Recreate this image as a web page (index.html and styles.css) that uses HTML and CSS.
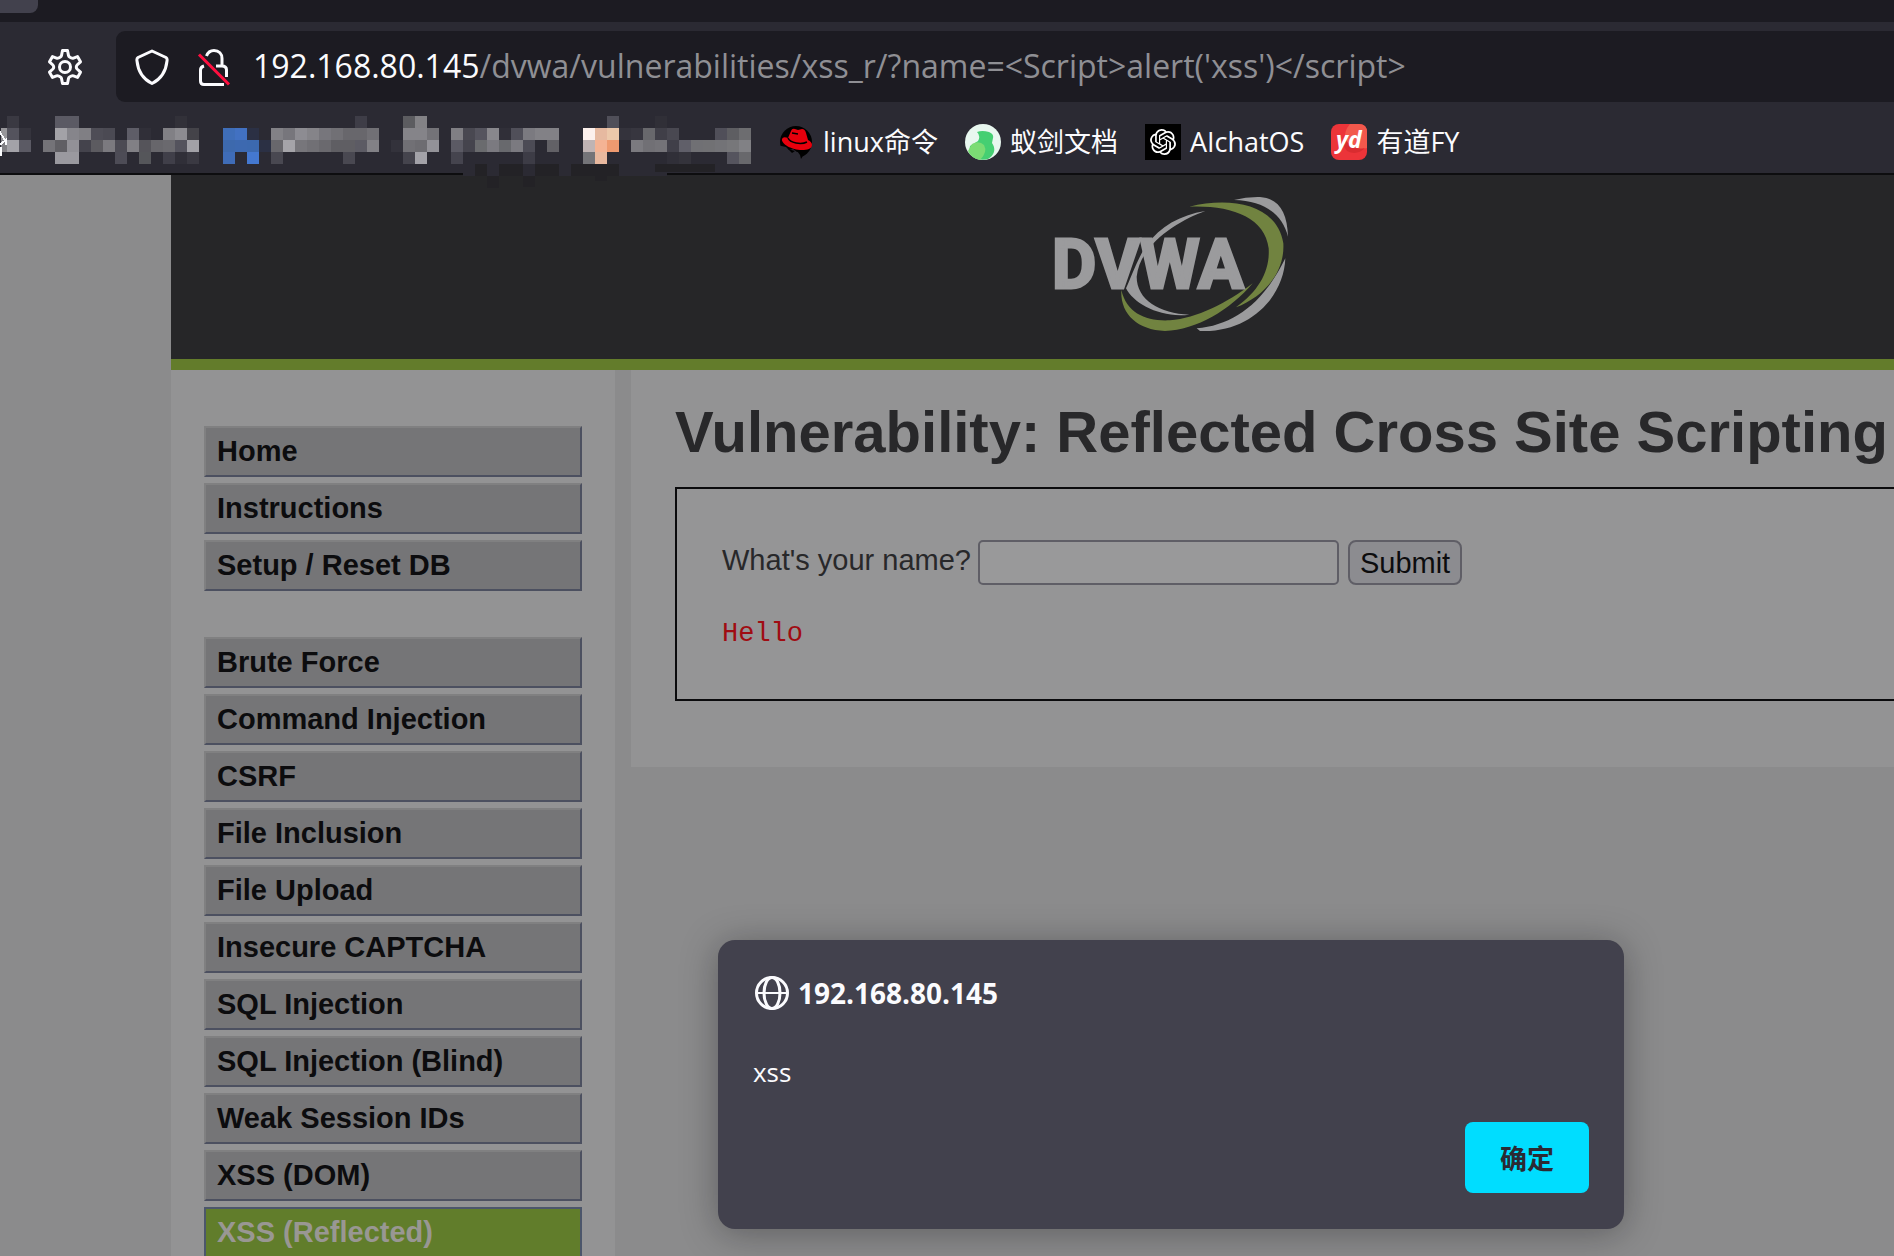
FILE: index.html
```html
<!DOCTYPE html>
<html lang="zh-CN">
<head>
<meta charset="utf-8">
<title>Vulnerability: Reflected Cross Site Scripting</title>
<link rel="stylesheet" href="styles.css">
</head>
<body>
<header class="chrome">
  <div class="tabstrip"><div class="tab"></div></div>
  <div class="navbar">
    <button class="icon-button" type="button" aria-label="Settings">
      <svg width="36" height="38" viewBox="0 0 36 38" fill="none" stroke="#fbfbfe" stroke-width="3" stroke-linejoin="round">
        <path d="M15.500 2.500h5l1 5q.3 1.100 1.400 1.700l1.500.8q1 .5 2.100.1l4-1.500 3 5.200-3.400 3.200q-.8.800-.8 2t.8 2l3.400 3.200-3 5.200-4-1.500q-1.100-.4-2.100.1l-1.500.8q-1.100.6-1.400 1.700l-1 5h-5l-1-5q-.3-1.100-1.400-1.700l-1.500-.8q-1-.5-2.100-.1l-4 1.500-3-5.200 3.400-3.200q.8-.8.8-2t-.8-2l-3.400-3.200 3-5.200 4 1.500q1.100.4 2.100-.1l1.500-.8q1.100-.6 1.400-1.700z"/>
        <circle cx="18" cy="19" r="5.500"/>
      </svg>
    </button>
    <div class="urlbar">
      <svg width="34" height="36" viewBox="0 0 34 36" fill="none" stroke="#fbfbfe" stroke-width="3" stroke-linejoin="round">
        <path d="M17 2 31 8.500Q32.500 9.500 32 12C31 22 26 30 17 34.500 8 30 3 22 2 12Q1.500 9.500 3 8.500z"/>
      </svg>
      <svg class="lock" width="34" height="38" viewBox="0 0 34 38" fill="none" stroke="#fbfbfe" stroke-width="3">
        <path d="M9.500 8C11 4 13.500 2.500 17 2.500c5 0 8 3.500 8 8V18h-6M7 18q-3.500 1-3.500 4v11q0 3.500 3.500 3.500h20M25 18q4.500 0 4.500 4v7"/>
        <path stroke="#ff0f3f" d="M2 6.500 32 36.500"/>
      </svg>
      <div class="url"><span class="host">192.168.80.145</span>/dvwa/vulnerabilities/xss_r/?name=&lt;Script&gt;alert('xss')&lt;/script&gt;</div>
    </div>
  </div>
  <nav class="bookmarks">
    <svg class="mosaic" width="744" height="48" viewBox="0 0 62 4" shape-rendering="crispEdges" aria-hidden="true">
      <g>
        <rect x="0" fill="#3a3942"/><rect x="4" fill="#5b5a64"/><rect x="5" fill="#5b5a64"/><rect x="14" fill="#323139"/><rect x="29" fill="#3e3d47"/><rect x="33" fill="#5c5c60"/><rect x="34" fill="#838286"/><rect x="50" fill="#504f59"/><rect x="54" fill="#302f37"/>
      </g>
      <g transform="translate(0 1)">
        <rect class="half" x="-0.5" fill="#97969a"/><rect x="0" fill="#54535d"/><rect x="1" fill="#35343d"/><rect x="4" fill="#a3a2a7"/><rect x="5" fill="#86858b"/><rect x="6" fill="#807f84"/><rect x="7" fill="#4e4d56"/><rect x="8" fill="#4b4a53"/><rect x="10" fill="#5e5d67"/><rect x="11" fill="#302f38"/><rect x="13" fill="#818085"/><rect x="14" fill="#8d8c91"/><rect x="15" fill="#444349"/>
        <rect x="18" fill="#3f6eb9"/><rect x="19" fill="#4271c2"/><rect x="20" fill="#2b3044"/>
        <rect x="22" fill="#828186"/><rect x="23" fill="#77767c"/><rect x="24" fill="#8d8c92"/><rect x="25" fill="#858489"/><rect x="26" fill="#77767c"/><rect x="27" fill="#717075"/><rect x="28" fill="#68676c"/><rect x="29" fill="#68676c"/><rect x="30" fill="#717075"/>
        <rect x="33" fill="#858489"/><rect x="34" fill="#858489"/><rect x="35" fill="#747378"/><rect x="37" fill="#807f84"/><rect x="38" fill="#494851"/><rect x="39" fill="#55545e"/><rect x="40" fill="#88878c"/><rect x="41" fill="#302f38"/><rect x="42" fill="#504f59"/><rect x="43" fill="#7b7a80"/><rect x="44" fill="#828186"/><rect x="45" fill="#828186"/>
        <rect x="48" fill="#fcf0ec"/><rect x="49" fill="#e6b9a0"/><rect x="50" fill="#ecc8aa"/><rect x="51" fill="#34333c"/><rect x="52" fill="#37363f"/><rect x="53" fill="#68686c"/><rect x="54" fill="#403f48"/><rect x="55" fill="#494851"/><rect x="59" fill="#504f59"/><rect x="60" fill="#5e5e62"/><rect x="61" fill="#6d6d70"/>
      </g>
      <g transform="translate(0 2)">
        <rect class="half" x="-0.5" fill="#818085"/><rect x="0" fill="#a3a2a8"/><rect x="1" fill="#5b5a64"/><rect x="3" fill="#747378"/><rect x="4" fill="#605f64"/><rect x="5" fill="#929197"/><rect x="6" fill="#44434c"/><rect x="7" fill="#5c5b60"/><rect x="8" fill="#7b7a7f"/><rect x="9" fill="#4c4b54"/><rect x="10" fill="#818085"/><rect x="11" fill="#55545a"/><rect x="12" fill="#67666b"/><rect x="13" fill="#6a696e"/><rect x="14" fill="#54535d"/><rect x="15" fill="#a2a1a7"/>
        <rect x="18" fill="#3d69ad"/><rect x="19" fill="#3d69b0"/><rect x="20" fill="#3c69af"/><rect x="21" fill="#2b3044"/>
        <rect x="22" fill="#68676c"/><rect x="23" fill="#a5a4a9"/><rect x="24" fill="#77767b"/><rect x="25" fill="#717075"/><rect x="26" fill="#6a696e"/><rect x="27" fill="#5f5e63"/><rect x="28" fill="#5f5e63"/><rect x="29" fill="#5c5b64"/><rect x="30" fill="#828186"/><rect x="32" fill="#33323b"/><rect x="33" fill="#717075"/><rect x="34" fill="#6d6c71"/><rect x="35" fill="#939298"/>
        <rect x="37" fill="#5b5a64"/><rect x="38" fill="#45444d"/><rect x="39" fill="#6a6b6e"/><rect x="40" fill="#7b7a80"/><rect x="41" fill="#68696d"/><rect x="42" fill="#7b7a80"/><rect x="43" fill="#4c4b55"/><rect x="45" fill="#626166"/>
        <rect x="48" fill="#c0b4b4"/><rect x="49" fill="#f4b394"/><rect x="50" fill="#ee9a70"/><rect x="52" fill="#7b7a7f"/><rect x="53" fill="#717075"/><rect x="54" fill="#747378"/><rect x="55" fill="#403f49"/><rect x="56" fill="#605f69"/><rect x="57" fill="#707074"/><rect x="58" fill="#717174"/><rect x="59" fill="#737377"/><rect x="60" fill="#77777a"/><rect x="61" fill="#818185"/>
      </g>
      <g transform="translate(0 3)">
        <rect x="4" fill="#9a999f"/><rect x="5" fill="#9a999f"/><rect x="9" fill="#4d4c56"/><rect x="11" fill="#55565a"/><rect x="13" fill="#403f49"/><rect x="14" fill="#302f38"/><rect x="15" fill="#3a3942"/><rect x="18" fill="#3f6cb7"/><rect x="20" fill="#4478d0"/><rect x="22" fill="#494851"/><rect x="28" fill="#494851"/><rect x="33" fill="#45444d"/><rect x="34" fill="#a3a2a8"/><rect x="37" fill="#45444e"/><rect x="43" fill="#3d3c46"/><rect x="48" fill="#747478"/><rect x="49" fill="#e8b89e"/><rect x="55" fill="#302f38"/><rect x="56" fill="#34333b"/><rect x="60" fill="#55545e"/><rect x="61" fill="#68686c"/>
      </g>
      <path fill="#2b2a33" d="M38 4h17v1H38z"/>
      <path fill="#232226" d="M39 4h1v1h-1zM41 4h2v1h-2zM44 4h2v1h-2zM47 4h4v1h-4zM54 4h5v.7h-5zM40 5h1v1h-1zM43 5h1v.9h-1zM49 5h1v.4h-1z"/>
      <path fill="none" stroke="#fbfbfe" stroke-width=".15" d="M-.6 1.300l.4.700M-.6 2.400l.5-.4v.4M-.5 2.600v.7"/>
    </svg>
    <a class="bookmark" href="#">
      <svg width="36" height="36" viewBox="1 0 36 36">
        <circle cx="19" cy="18" r="16" fill="#000"/>
        <path fill="#2b2a33" d="M0 21 9 23l3 3 4-1 4 3 6-1-1 9H0z"/>
        <path fill="#000" d="M11 25l7 2-3 2zM20 27l13-3-6 6-3 5-1-4z"/>
        <path fill="#e8000d" d="M11 14 14 7q1-3 4-2l3 1 4-1q3 0 4 4l2 7q4 2 4 5c0 4-5 5-10 5C15 26 4 20 5 15q1-3 6-1z"/>
        <path fill="none" stroke="#000" stroke-width="1.500" d="M11 14c2 5 13 7 19 4M15 9l6 1"/>
      </svg>
      <span>linux命令</span>
    </a>
    <a class="bookmark" href="#">
      <svg width="36" height="36" viewBox="0 0 36 36">
        <circle cx="18" cy="18" r="18" fill="#e8f7ef"/>
        <path fill="#45cf72" d="M12 8q5-2 12 0 5 2 4 6l-1 5c5 7 1 13-4 16Q12 38 4 29l1-7 8-5q3-5-1-9z"/>
        <path fill="#7bdc74" d="M3 27 7 20q7-4 12 1 4 7-4 15Q6 34 3 27z"/>
      </svg>
      <span>蚁剑文档</span>
    </a>
    <a class="bookmark" href="#">
      <svg width="36" height="36" viewBox="-6 -6 36 36">
        <path fill="#000" d="M-6-6h36v36H-6z"/>
        <path fill="#fff" transform="translate(-1 -1) scale(1.083)" d="M22.282 9.821a5.985 5.985 0 0 0-.516-4.910 6.046 6.046 0 0 0-6.510-2.900A6.065 6.065 0 0 0 4.981 4.182a5.985 5.985 0 0 0-3.998 2.900 6.046 6.046 0 0 0 .743 7.097 5.980 5.980 0 0 0 .511 4.911 6.051 6.051 0 0 0 6.515 2.900A5.985 5.985 0 0 0 13.260 24a6.056 6.056 0 0 0 5.772-4.206 5.990 5.990 0 0 0 3.998-2.900 6.056 6.056 0 0 0-.748-7.073zM13.260 22.430a4.476 4.476 0 0 1-2.876-1.041l.141-.080 4.779-2.758a.795.795 0 0 0 .392-.681v-6.737l2.020 1.169a.071.071 0 0 1 .038.052v5.583a4.504 4.504 0 0 1-4.494 4.493zM3.600 18.304a4.471 4.471 0 0 1-.535-3.014l.142.085 4.783 2.759a.771.771 0 0 0 .780 0l5.843-3.369v2.332a.080.080 0 0 1-.033.062L9.740 19.950a4.500 4.500 0 0 1-6.140-1.646zM2.341 7.896a4.485 4.485 0 0 1 2.366-1.973V11.600a.766.766 0 0 0 .388.677l5.814 3.354-2.020 1.169a.076.076 0 0 1-.071 0l-4.830-2.787A4.504 4.504 0 0 1 2.341 7.872zm16.596 3.856-5.833-3.388L15.119 7.200a.076.076 0 0 1 .071 0l4.830 2.791a4.494 4.494 0 0 1-.676 8.105v-5.678a.790.790 0 0 0-.407-.667zm2.011-3.023-.142-.085-4.774-2.782a.776.776 0 0 0-.785 0L9.409 9.230V6.897a.066.066 0 0 1 .028-.061l4.830-2.787a4.499 4.499 0 0 1 6.680 4.660zM8.307 12.863l-2.020-1.164a.080.080 0 0 1-.038-.057V6.075a4.499 4.499 0 0 1 7.376-3.454l-.142.081L8.704 5.460a.795.795 0 0 0-.393.681zm1.097-2.365 2.602-1.500 2.607 1.500v2.999l-2.597 1.500-2.607-1.500z"/>
      </svg>
      <span>AIchatOS</span>
    </a>
    <a class="bookmark" href="#">
      <svg width="36" height="36" viewBox="0 0 36 36">
        <rect width="36" height="36" rx="8" fill="#ec3439"/>
        <path fill="#f2584c" d="M19 0h9q8 0 8 8v16Q22 28 14 15q-1-8 5-15z"/>
        <path fill="#d92c30" d="M14 15q7 12 20 9-8 8-18 3-5-5-2-12z"/>
        <text class="yd" x="5" y="24">yd</text>
      </svg>
      <span>有道FY</span>
    </a>
  </nav>
</header>

<div class="viewport">
  <div class="page">
    <div class="banner">
      <svg class="logo" width="240" height="140" viewBox="60 45 720 420" role="img" aria-label="DVWA">
        <path fill="#9b9b9d" d="M612 60Q650 50 690 51C745 55 772 95 774 170 758 105 705 62 612 60zM766 235C762 350 660 460 510 453L500 445C610 435 700 370 766 235zM526 93C450 120 330 190 320 290 320 360 390 400 478 404 390 415 310 370 288 325 300 300 325 230 350 195 390 140 450 105 526 93z"/>
        <path fill="#718340" d="M478 80C600 50 740 70 760 190 765 280 700 350 618 382 690 330 720 270 716 205 705 110 600 75 478 80zM274 330C290 400 350 425 420 421 500 415 590 370 668 310 600 390 500 450 405 453 320 450 270 400 274 330z"/>
        <text class="logo-text" x="66" y="325">DVWA</text>
      </svg>
    </div>
    <div class="columns">
      <nav class="menu">
        <ul>
          <li><a href="#">Home</a></li>
          <li><a href="#">Instructions</a></li>
          <li><a href="#">Setup / Reset DB</a></li>
        </ul>
        <ul>
          <li><a href="#">Brute Force</a></li>
          <li><a href="#">Command Injection</a></li>
          <li><a href="#">CSRF</a></li>
          <li><a href="#">File Inclusion</a></li>
          <li><a href="#">File Upload</a></li>
          <li><a href="#">Insecure CAPTCHA</a></li>
          <li><a href="#">SQL Injection</a></li>
          <li><a href="#">SQL Injection (Blind)</a></li>
          <li><a href="#">Weak Session IDs</a></li>
          <li><a href="#">XSS (DOM)</a></li>
          <li><a class="selected" href="#">XSS (Reflected)</a></li>
        </ul>
      </nav>
      <main class="content">
        <h1>Vulnerability: Reflected Cross Site Scripting</h1>
        <div class="panel">
          <form class="name-form">
            <label for="name">What's your name?</label>
            <input id="name" type="text" name="name">
            <button type="submit">Submit</button>
          </form>
          <pre class="greeting">Hello</pre>
        </div>
      </main>
    </div>
  </div>

  <div class="dialog" role="dialog" aria-labelledby="dialog-title">
    <div class="dialog-head">
      <svg width="34" height="34" viewBox="0 0 34 34" fill="none" stroke="#fbfbfe" stroke-width="2">
        <circle cx="17" cy="17" r="15.500" stroke-width="3"/>
        <ellipse cx="17" cy="17" rx="8" ry="15.500" stroke-width="3"/>
        <path d="M1 17h32"/>
      </svg>
      <h2 id="dialog-title">192.168.80.145</h2>
    </div>
    <p>xss</p>
    <button class="ok" type="button">确定</button>
  </div>
</div>
</body>
</html>
```
FILE: styles.css
```css
* { box-sizing: border-box; }

html, body { height: 100%; }

body {
  margin: 0;
  display: flex;
  flex-direction: column;
  overflow: hidden;
  background: #8b8b8c;
  font-family: "Liberation Sans", Arial, sans-serif;
}

svg { display: block; flex: none; }

/* Browser chrome */
.chrome {
  position: relative;
  z-index: 1;
  flex: none;
  background: #2b2a33;
  border-bottom: 2px solid #0d0d0f;
  color: #fbfbfe;
  font-family: "Open Sans", "Noto Sans CJK SC", sans-serif;
}

.tabstrip { height: 22px; background: #1c1b22; }

.tab {
  width: 38px;
  height: 13px;
  background: #42414d;
  border-radius: 0 0 8px 0;
}

.navbar { display: flex; padding-top: 9px; }

.icon-button {
  width: 116px;
  padding: 0 0 0 47px;
  border: 0;
  background: none;
}

.urlbar {
  flex: 1;
  display: flex;
  align-items: center;
  height: 71px;
  padding-left: 19px;
  background: #1c1b22;
  border-radius: 9px 0 0 9px;
}

.lock { margin-left: 28px; }

.url {
  margin-left: 22px;
  padding-bottom: 2px;
  color: #8f8f94;
  font-size: 32px;
  line-height: 42px;
  white-space: nowrap;
}

.host { color: #fbfbfe; }

.bookmarks {
  display: flex;
  align-items: center;
  gap: 27px;
  height: 71px;
  padding: 9px 0 0 7px;
}

.mosaic { margin-bottom: 4px; overflow: visible; }
.mosaic rect { width: 1px; height: 1px; }
.mosaic .half { width: 0.5px; }

.bookmark {
  display: flex;
  align-items: center;
  gap: 9px;
  color: #fbfbfe;
  font-size: 27px;
  line-height: 36px;
  text-decoration: none;
  white-space: nowrap;
}

.yd { fill: #fff; font: italic bold 23px "Open Sans", sans-serif; }

/* Page under the modal shade */
.viewport {
  position: relative;
  flex: 1;
  min-height: 0;
  overflow: hidden;
}

.page { margin-left: 171px; }

.banner {
  height: 195px;
  padding: 20px 0 0 879px;
  background: #262628;
  border-bottom: 11px solid #637c2b;
}

.logo-text {
  fill: #9b9b9d;
  stroke: #9b9b9d;
  stroke-width: 9px;
  font: bold 204px Roboto, sans-serif;
}

.columns {
  display: flex;
  align-items: flex-start;
  gap: 16px;
}

.menu {
  flex: none;
  display: flex;
  flex-direction: column;
  gap: 46px;
  width: 444px;
  padding: 56px 33px;
  background: #939394;
}

.menu ul {
  display: flex;
  flex-direction: column;
  gap: 6px;
  margin: 0;
  padding: 0;
  list-style: none;
}

.menu a {
  display: block;
  padding: 0 11px;
  border: 2px solid;
  border-color: #808081 #4c5060 #4c5060 #808081;
  background: #757577;
  color: #0c0c0e;
  font-size: 29px;
  font-weight: bold;
  line-height: 47px;
  text-decoration: none;
}

.menu .selected {
  border-color: #4c566b;
  background: #617d2b;
  color: #999793;
}

.content {
  flex: 1;
  min-width: 0;
  padding: 28px 0 66px 44px;
  background: #939394;
  color: #28282a;
  font-size: 29px;
}

h1 {
  margin: 0 0 21px;
  font-size: 58px;
  line-height: 68px;
  white-space: nowrap;
}

.panel {
  padding: 51px 45px 48px;
  border: 2px solid #0b0b0d;
  border-right: 0;
  background: #959596;
}

.name-form { display: flex; align-items: center; }

.name-form label { line-height: 41px; padding-bottom: 4px; }

.name-form input {
  width: 361px;
  height: 45px;
  margin: 0 9px 0 7px;
  padding: 0 6px;
  border: 2px solid #5f5e66;
  border-radius: 5px;
  background: #99999a;
  font: inherit;
}

.name-form button {
  height: 45px;
  padding: 2px 10px 0;
  border: 2px solid #5f5e66;
  border-radius: 8px;
  background: #8c8c90;
  color: #0c0c0e;
  font: inherit;
}

.greeting {
  margin: 33px 0 0;
  color: #a00c12;
  font: 27px/33px "Liberation Mono", monospace;
}

/* Alert dialog */
.dialog {
  position: absolute;
  top: 765px;
  left: 718px;
  display: flex;
  flex-direction: column;
  width: 906px;
  padding: 34px 35px 36px;
  border-radius: 17px;
  background: #42414d;
  box-shadow: 0 4px 36px rgba(12, 12, 13, 0.35);
  color: #fbfbfe;
  font-family: "Open Sans", "Noto Sans CJK SC", sans-serif;
}

.dialog-head {
  display: flex;
  align-items: center;
  gap: 9px;
  padding-left: 2px;
}

.dialog h2 { margin: 0; font-size: 28px; line-height: 38px; }

.dialog p { margin: 42px 0 32px; font-size: 26px; line-height: 36px; }

.ok {
  align-self: flex-end;
  width: 124px;
  height: 71px;
  padding: 0;
  border: 0;
  border-radius: 8px;
  background: #00ddff;
  color: #2b2a33;
  font: bold 27px "Noto Sans CJK SC", sans-serif;
}
```
